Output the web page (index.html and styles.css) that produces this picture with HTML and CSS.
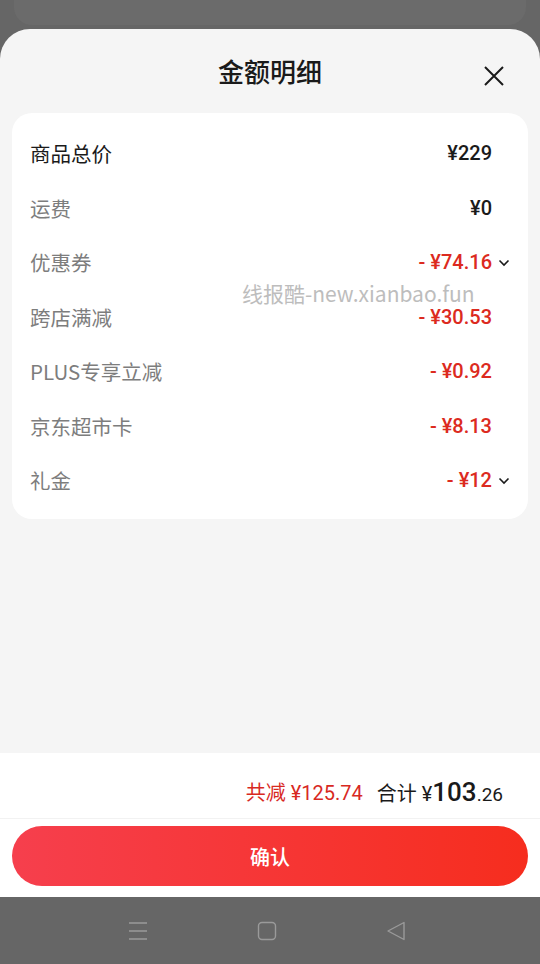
FILE: index.html
```html
<!DOCTYPE html>
<html lang="zh-CN">
<head>
  <meta charset="UTF-8" />
  <meta name="viewport" content="width=device-width, initial-scale=1.0" />
  <title>金额明细</title>
  <link rel="stylesheet" href="styles.css">
</head>
<body>
  <div class="backdrop"><div class="backdrop-card"></div></div>

  <div class="sheet">
    <div class="sheet-head">
      <h2>金额明细</h2>
      <svg class="close" width="22" height="22" viewBox="0 0 22 22">
        <path d="M2 2 L20 20 M20 2 L2 20" stroke="#1a1a1a" stroke-width="2" fill="none" />
      </svg>
    </div>

    <!-- price rows -->
    <div class="card">
      <div class="row">
        <span class="label dark">商品总价</span>
        <span class="value">¥229</span>
        <span class="more"></span>
      </div>
      <div class="row">
        <span class="label">运费</span>
        <span class="value">¥0</span>
        <span class="more"></span>
      </div>
      <div class="row">
        <span class="label">优惠券</span>
        <span class="value red">- ¥74.16</span>
        <span class="more"><svg width="12" height="8" viewBox="0 0 12 8"><path d="M1.5 1.5 L6 6 L10.5 1.5" stroke="#1a1a1a" stroke-width="1.6" fill="none" /></svg></span>
      </div>
      <div class="row">
        <span class="label">跨店满减</span>
        <span class="value red">- ¥30.53</span>
        <span class="more"></span>
      </div>
      <div class="row">
        <span class="label">PLUS专享立减</span>
        <span class="value red">- ¥0.92</span>
        <span class="more"></span>
      </div>
      <div class="row">
        <span class="label">京东超市卡</span>
        <span class="value red">- ¥8.13</span>
        <span class="more"></span>
      </div>
      <div class="row">
        <span class="label">礼金</span>
        <span class="value red">- ¥12</span>
        <span class="more"><svg width="12" height="8" viewBox="0 0 12 8"><path d="M1.5 1.5 L6 6 L10.5 1.5" stroke="#1a1a1a" stroke-width="1.6" fill="none" /></svg></span>
      </div>
    </div>
  </div>

  <div class="footer">
    <div class="totals">
      <span class="saved">共减 ¥125.74</span>
      <span class="sum">合计 ¥<b>103</b><small>.26</small></span>
    </div>
    <div class="btn-wrap">
      <button type="button">确认</button>
    </div>
  </div>

  <div class="navbar">
    <svg width="22" height="22" viewBox="0 0 22 22">
      <path d="M2 3 H20 M2 11 H20 M2 19 H20" stroke="#9a9a9a" stroke-width="1.4" fill="none" />
    </svg>
    <svg width="22" height="22" viewBox="0 0 22 22">
      <rect x="2.5" y="2.5" width="17" height="17" rx="3.5" stroke="#9a9a9a" stroke-width="1.4" fill="none" />
    </svg>
    <svg width="22" height="22" viewBox="0 0 22 22">
      <path d="M19 2.5 V19.5 L3 11 Z" stroke="#9a9a9a" stroke-width="1.4" stroke-linejoin="round" fill="none" />
    </svg>
  </div>

  <div class="watermark">线报酷-new.xianbao.fun</div>
</body>
</html>
```

FILE: styles.css
```css
* { box-sizing: border-box; }
body {
  margin: 0;
  width: 540px;
  height: 964px;
  display: flex;
  flex-direction: column;
  font-family: Roboto, "Noto Sans CJK SC", sans-serif;
  background: #666;
  color: #1a1a1a;
  overflow: hidden;
  position: relative;
}
.backdrop {
  height: 29px;
  background: #666;
  padding: 0 14px;
}
.backdrop-card {
  height: 25px;
  background: #6b6b6b;
  border-radius: 0 0 18px 18px;
}
.sheet {
  flex: 1;
  background: #f5f5f5;
  border-radius: 30px 30px 0 0;
  padding: 0 12px;
}
.sheet-head {
  height: 84px;
  display: flex;
  align-items: center;
  justify-content: center;
  position: relative;
  padding-bottom: 2px;
}
.sheet-head h2 {
  margin: 0;
  font-size: 26px;
  font-weight: 500;
  font-family: "Noto Sans CJK SC", sans-serif;
}
.close {
  position: absolute;
  right: 23px;
  top: 36px;
}
.card {
  background: #fff;
  border-radius: 20px;
  padding: 13px 0 11px 18px;
}
.row {
  height: 54.5px;
  display: flex;
  align-items: center;
}
.label {
  flex: 1;
  font-size: 20.5px;
  color: #7d7d7d;
  font-family: "Noto Sans CJK SC", sans-serif;
}
.label.dark { color: #1a1a1a; }
.value {
  font-size: 20px;
  font-weight: 500;
  line-height: 1.1;
  color: #1a1a1a;
}
.value.red { color: #dc2a20; }
.more {
  width: 36px;
  display: flex;
  padding-left: 6px;
  padding-top: 1px;
}
.footer {
  height: 144px;
  background: #fff;
}
.totals {
  height: 66px;
  padding-top: 12px;
  display: flex;
  align-items: center;
  justify-content: flex-end;
  padding-right: 37px;
  gap: 14px;
  border-bottom: 1px solid #f2f2f2;
}
.saved {
  font-size: 20px;
  color: #d8291f;
}
.sum {
  font-size: 20px;
  color: #1a1a1a;
}
.sum b {
  font-size: 26px;
  font-weight: 500;
}
.sum small { font-size: 19px; }
.btn-wrap { padding: 7px 12px 0; }
button {
  width: 100%;
  height: 60px;
  border: none;
  border-radius: 30px;
  background: linear-gradient(to right, #f63f4d, #f62d1e);
  color: #fff;
  font-size: 20px;
  font-weight: 500;
  font-family: "Noto Sans CJK SC", sans-serif;
}
.navbar {
  height: 67px;
  background: #666;
  display: flex;
  align-items: center;
  justify-content: center;
  gap: 107px;
  padding-right: 6px;
}
.watermark {
  position: absolute;
  left: 242px;
  top: 283px;
  font-size: 21px;
  line-height: 1;
  color: #bdbdbd;
  font-family: "Noto Sans CJK SC", sans-serif;
}
```
